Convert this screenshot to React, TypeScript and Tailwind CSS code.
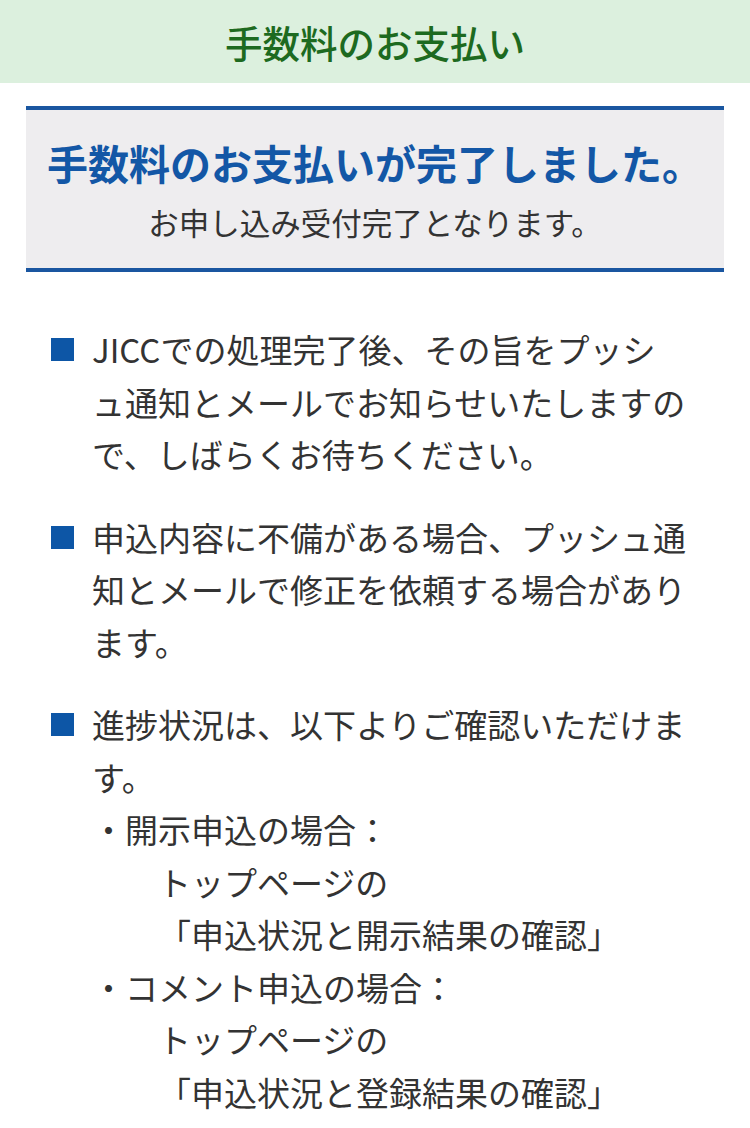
const font = {
  fontFamily: '"Noto Sans CJK JP", "Noto Sans", sans-serif',
};

type Line = { text: string; indent?: boolean };

const items: Line[][] = [
  [
    { text: 'JICCでの処理完了後、その旨をプッシ' },
    { text: 'ュ通知とメールでお知らせいたしますの' },
    { text: 'で、しばらくお待ちください。' },
  ],
  [
    { text: '申込内容に不備がある場合、プッシュ通' },
    { text: '知とメールで修正を依頼する場合があり' },
    { text: 'ます。' },
  ],
  [
    { text: '進捗状況は、以下よりご確認いただけま' },
    { text: 'す。' },
    { text: '・開示申込の場合：' },
    { text: 'トップページの', indent: true },
    { text: '「申込状況と開示結果の確認」', indent: true },
    { text: '・コメント申込の場合：' },
    { text: 'トップページの', indent: true },
    { text: '「申込状況と登録結果の確認」', indent: true },
  ],
];

export default function App() {
  return (
    <div className="w-[750px] min-h-[1128px] bg-white" style={font}>
      <header className="flex h-[83px] items-center justify-center bg-[#dcf0de]">
        <h1 className="text-[37.5px] font-medium leading-none text-[#1d6a20]">
          手数料のお支払い
        </h1>
      </header>

      <section className="mx-[26px] mt-[23px] border-y-4 border-[#1a56a0] bg-[#eeedef] pb-[26px] pt-[28px] text-center">
        <p className="text-[41px] font-bold leading-[48px] text-[#1357a6]">
          手数料のお支払いが完了しました。
        </p>
        <p className="mt-[16px] text-[30.5px] leading-[40px] text-[#333]">
          お申し込み受付完了となります。
        </p>
      </section>

      <ul className="mt-[51px] flex flex-col gap-[30px] pl-[51px] text-[33px] leading-[52.5px] text-[#333]">
        {items.map((lines, i) => (
          <li key={i} className="flex items-start gap-[18px]">
            <span className="mt-[15px] h-[23px] w-[23px] shrink-0 bg-[#0d56a6]" />
            <div className="flex flex-col">
              {lines.map((l, j) => (
                <span
                  key={j}
                  className={l.indent ? 'whitespace-nowrap pl-[66px]' : 'whitespace-nowrap'}
                >
                  {l.text}
                </span>
              ))}
            </div>
          </li>
        ))}
      </ul>
    </div>
  );
}
